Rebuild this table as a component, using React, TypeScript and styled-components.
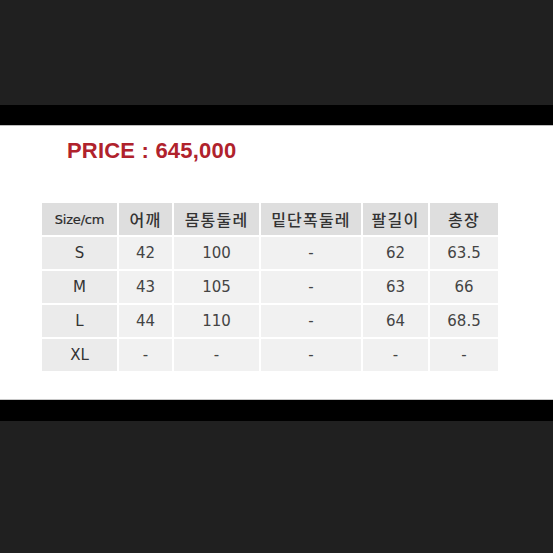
import React, { FC } from "react";
import styled, { createGlobalStyle } from "styled-components";

const GlobalStyle = createGlobalStyle`
  html, body {
    margin: 0;
    padding: 0;
    background: #202020;
  }
  * {
    box-sizing: border-box;
  }
`;

const Root = styled.div`
  width: 553px;
  height: 553px;
  display: flex;
  flex-direction: column;
  background: #202020;
  font-family: "DejaVu Sans", "Noto Sans CJK KR", sans-serif;
`;

const DarkBand = styled.div<{ $h: number }>`
  height: ${(p) => p.$h}px;
  flex-shrink: 0;
  background: #202020;
`;

const BlackBand = styled.div<{ $h: number }>`
  height: ${(p) => p.$h}px;
  flex-shrink: 0;
  background: #000;
`;

const Panel = styled.div`
  height: 275px;
  flex-shrink: 0;
  background: #fff;
  border-top: 1px solid #bdbdbd;
  border-bottom: 1px solid #c8c8c8;
  padding: 12px 0 0 42px;
  display: flex;
  flex-direction: column;
`;

const Price = styled.div`
  margin-left: 25px;
  height: 30px;
  font-family: "Liberation Sans", Arial, sans-serif;
  font-weight: bold;
  font-size: 22px;
  letter-spacing: 0.2px;
  color: #b0222c;
`;

const Table = styled.div`
  margin-top: 35px;
  display: grid;
  grid-template-columns: 75px 53px 85px 100px 65px 68px;
  grid-auto-rows: 32px;
  gap: 2px;
  width: fit-content;
`;

const Cell = styled.div<{ $kind: "head" | "size" | "data" }>`
  display: flex;
  align-items: center;
  justify-content: center;
  background: ${(p) =>
    p.$kind === "head" ? "#dedede" : p.$kind === "size" ? "#ebebeb" : "#f1f1f1"};
  color: ${(p) => (p.$kind === "data" ? "#444" : "#333")};
  font-size: ${(p) => (p.$kind === "head" ? "16px" : "15px")};
  font-family: ${(p) =>
    p.$kind === "data"
      ? `"DejaVu Sans", sans-serif`
      : `"DejaVu Sans", "Noto Sans CJK KR", sans-serif`};
  letter-spacing: ${(p) => (p.$kind === "head" ? "1.2px" : "0")};
  font-weight: ${(p) => (p.$kind === "head" ? 500 : 400)};
`;

const SmallHead = styled(Cell)`
  font-size: 13px;
  letter-spacing: -0.2px;
  color: #2a2a2a;
  -webkit-text-stroke: 0.2px #2a2a2a;
`;

const heads = ["어깨", "몸통둘레", "밑단폭둘레", "팔길이", "총장"];

const rows: [string, string[]][] = [
  ["S", ["42", "100", "-", "62", "63.5"]],
  ["M", ["43", "105", "-", "63", "66"]],
  ["L", ["44", "110", "-", "64", "68.5"]],
  ["XL", ["-", "-", "-", "-", "-"]],
];

const App: FC = () => {
  return (
    <Root>
      <GlobalStyle />
      <DarkBand $h={105} />
      <BlackBand $h={20} />
      <Panel>
        <Price>PRICE : 645,000</Price>
        <Table>
          <SmallHead $kind="head">Size/cm</SmallHead>
          {heads.map((h) => (
            <Cell key={h} $kind="head">
              {h}
            </Cell>
          ))}
          {rows.map(([size, vals]) => (
            <React.Fragment key={size}>
              <Cell $kind="size">{size}</Cell>
              {vals.map((v, i) => (
                <Cell key={i} $kind="data">
                  {v}
                </Cell>
              ))}
            </React.Fragment>
          ))}
        </Table>
      </Panel>
      <BlackBand $h={21} />
      <DarkBand $h={132} />
    </Root>
  );
};

export default App;
